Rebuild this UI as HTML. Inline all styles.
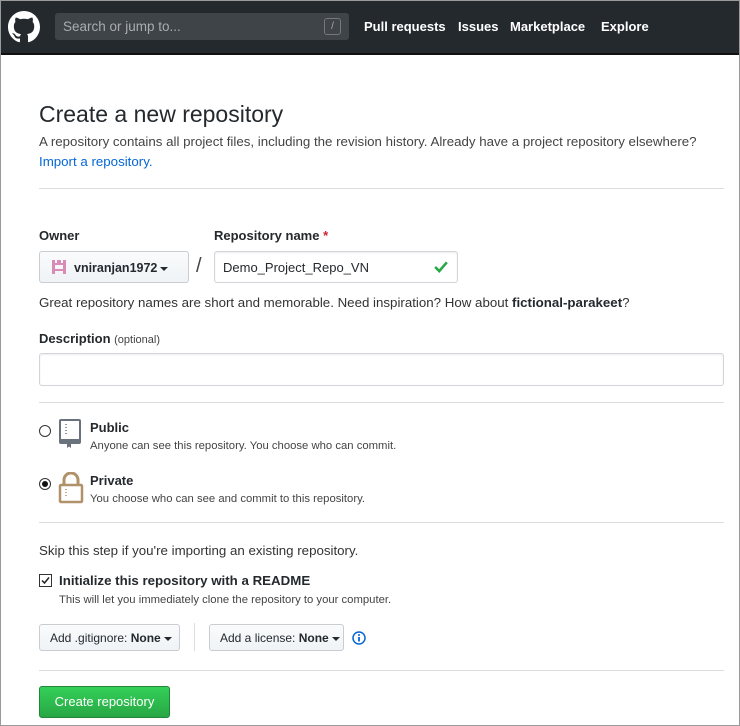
<!DOCTYPE html>
<html><head><meta charset="utf-8"><style>
*{box-sizing:border-box;margin:0;padding:0}
body{width:740px;height:726px;overflow:hidden;background:#fff;font-family:"Liberation Sans",Arial,sans-serif;color:#24292e;position:relative}
.frame{position:absolute;left:0;top:0;width:740px;height:726px;border:1px solid #9a9a9a;pointer-events:none;z-index:5}
.hdr{position:absolute;left:0;top:0;width:740px;height:55px;background:#24292e;border-bottom:2px solid #111}
.search{position:absolute;left:55px;top:13px;width:294px;height:27px;background:#3f4448;border-radius:3px;color:#a8adb2;font-size:13.5px;padding:6px 8px}
.slash{position:absolute;right:8px;top:5px;width:17px;height:17px;border:1px solid #777;border-radius:3px;font-size:10px;text-align:center;line-height:15px;color:#aaa}
.nav{position:absolute;top:19px;color:#fff;font-weight:bold;font-size:13px}
.abs{position:absolute;white-space:nowrap}
.hr{position:absolute;left:39px;width:685px;height:1px;background:#ddd}
.btn{position:absolute;border:1px solid #c9ccd0;border-radius:3px;background:linear-gradient(#fafbfc,#eff3f6);font-size:12px}
.caret{display:inline-block;width:0;height:0;border-left:4px solid transparent;border-right:4px solid transparent;border-top:4px solid #24292e;vertical-align:middle;margin-left:3px}
.inp{position:absolute;border:1px solid #d1d5da;border-radius:3px;background:#fff;box-shadow:inset 0 1px 2px rgba(0,0,0,.075)}
.small{font-size:11.3px;color:#444}
.p{font-size:13.3px}
</style></head><body>
<div class="frame"></div>
<div class="hdr">
<svg style="position:absolute;left:8px;top:11px" width="32" height="32" viewBox="0 0 16 16"><path fill="#fff" d="M8 0C3.58 0 0 3.580 0 8c0 3.54 2.29 6.530 5.47 7.59.4.07.55-.17.55-.38 0-.19-.01-.82-.01-1.49-2.01.37-2.53-.49-2.69-.94-.09-.23-.48-.94-.82-1.130-.28-.15-.68-.52-.01-.53.63-.01 1.08.58 1.23.82.72 1.21 1.87.87 2.33.66.07-.52.28-.87.51-1.07-1.78-.2-3.64-.89-3.640-3.95 0-.87.31-1.59.82-2.150-.08-.2-.36-1.02.08-2.12 0 0 .67-.21 2.2.82.64-.18 1.32-.27 2-.27.68 0 1.36.09 2 .27 1.53-1.04 2.2-.82 2.2-.82.44 1.1.16 1.92.08 2.12.51.56.82 1.27.82 2.15 0 3.07-1.87 3.75-3.65 3.95.29.25.54.73.54 1.48 0 1.07-.01 1.93-.01 2.2 0 .21.15.46.55.38A8.013 8.013 0 0016 8c0-4.42-3.58-8-8-8z"/></svg>
<div class="search">Search or jump to...<div class="slash">/</div></div>
<div class="nav" style="left:364px">Pull requests</div>
<div class="nav" style="left:458px">Issues</div>
<div class="nav" style="left:510px">Marketplace</div>
<div class="nav" style="left:601px">Explore</div>
</div>
<div class="abs" style="left:39px;top:101px;font-size:23px;font-weight:300">Create a new repository</div>
<div class="abs p" style="left:39px;top:134px;color:#444">A repository contains all project files, including the revision history. Already have a project repository elsewhere?</div>
<div class="abs p" style="left:39px;top:154px;color:#0366d6">Import a repository.</div>
<div class="hr" style="top:188px"></div>
<div class="abs" style="left:39px;top:228px;font-size:13px;font-weight:bold">Owner</div>
<div class="abs" style="left:214px;top:228px;font-size:13px;font-weight:bold">Repository name <span style="color:#cb2431">*</span></div>
<div class="btn" style="left:39px;top:251px;width:150px;height:32px;padding:8px 0 0 12px;font-weight:bold;font-size:12.5px">
<svg width="14" height="14" style="vertical-align:-2px;margin-right:8px"><path fill="#d88bb5" d="M0 0h3v3h2V0h4v3h2V0h3v14h-3v-3H3v3H0z M3 5v4h8V5z"/></svg>vniranjan1972<span class="caret"></span></div>
<div class="abs" style="left:196px;top:255px;font-size:20px;color:#444">/</div>
<div class="inp" style="left:214px;top:251px;width:244px;height:32px;padding:8px 8px;font-size:13px">Demo_Project_Repo_VN
<svg style="position:absolute;right:9px;top:9px" width="14" height="12" viewBox="0 0 12 10"><path d="M1 5l3.5 3.5L11 1" stroke="#28a745" stroke-width="2.2" fill="none"/></svg></div>
<div class="abs p" style="left:39px;top:295px;color:#333">Great repository names are short and memorable. Need inspiration? How about <b style="color:#24292e">fictional-parakeet</b>?</div>
<div class="abs" style="left:39px;top:331px;font-size:13px;font-weight:bold">Description <span style="font-weight:normal;font-size:11px;color:#444">(optional)</span></div>
<div class="inp" style="left:39px;top:353px;width:685px;height:33px"></div>
<div class="hr" style="top:402px"></div>
<div class="abs" style="left:39px;top:425px;width:12px;height:12px;border:1px solid #333;border-radius:50%"></div>
<svg class="abs" style="left:58px;top:419px" width="24" height="30" viewBox="0 0 24 30"><rect x="2" y="1" width="20" height="23" rx="1" fill="none" stroke="#6a737d" stroke-width="2"/><rect x="2" y="20" width="20" height="4" fill="#6a737d"/><path d="M8 5v1M8 8v1M8 11v1M8 14v1" stroke="#6a737d" stroke-width="1.5"/><path d="M9 24v5l2-1.5 2 1.5v-5z" fill="#6a737d"/></svg>
<div class="abs" style="left:90px;top:420px;font-size:13px;font-weight:bold">Public</div>
<div class="abs small" style="left:90px;top:440px">Anyone can see this repository. You choose who can commit.</div>
<div class="abs" style="left:39px;top:478px;width:12px;height:12px;border:1px solid #333;border-radius:50%"><div style="margin:2px;width:6px;height:6px;border-radius:50%;background:#111"></div></div>
<svg class="abs" style="left:58px;top:472px" width="26" height="32" viewBox="0 0 26 32"><path d="M6 13V8a7 7 0 0114 0v5" fill="none" stroke="#b0916a" stroke-width="3"/><rect x="2" y="13" width="22" height="17" rx="1" fill="none" stroke="#b0916a" stroke-width="2.5"/><path d="M8 17v1M8 20v1M8 23v1" stroke="#b0916a" stroke-width="1.5"/></svg>
<div class="abs" style="left:90px;top:473px;font-size:13px;font-weight:bold">Private</div>
<div class="abs small" style="left:90px;top:493px">You choose who can see and commit to this repository.</div>
<div class="hr" style="top:522px"></div>
<div class="abs p" style="left:39px;top:543px;color:#333">Skip this step if you're importing an existing repository.</div>
<svg class="abs" style="left:39px;top:574px" width="13" height="13" viewBox="0 0 13 13"><rect x="0.5" y="0.5" width="12" height="12" fill="#fff" stroke="#333"/><path d="M3 6.5l2.5 2.5L10 3.5" stroke="#222" stroke-width="1.5" fill="none"/></svg>
<div class="abs" style="left:59px;top:573px;font-size:13.3px;font-weight:bold">Initialize this repository with a README</div>
<div class="abs small" style="left:59px;top:594px">This will let you immediately clone the repository to your computer.</div>
<div class="btn" style="left:39px;top:624px;width:141px;height:27px;padding:6px 0 0 10px">Add .gitignore: <b>None</b><span class="caret"></span></div>
<div class="abs" style="left:194px;top:623px;width:1px;height:28px;background:#ddd"></div>
<div class="btn" style="left:209px;top:624px;width:135px;height:27px;padding:6px 0 0 10px">Add a license: <b>None</b><span class="caret"></span></div>
<svg class="abs" style="left:352px;top:631px" width="14" height="14" viewBox="0 0 14 14"><circle cx="7" cy="7" r="6" fill="none" stroke="#0366d6" stroke-width="1.5"/><path d="M7 6v4.5" stroke="#0366d6" stroke-width="1.8"/><circle cx="7" cy="4" r="1" fill="#0366d6"/></svg>
<div class="hr" style="top:670px"></div>
<div class="abs" style="left:39px;top:686px;width:131px;height:32px;border-radius:3px;background:linear-gradient(#34d058,#28a745);border:1px solid #22863a;color:#fff;font-size:13px;text-align:center;line-height:30px">Create repository</div>
</body></html>
